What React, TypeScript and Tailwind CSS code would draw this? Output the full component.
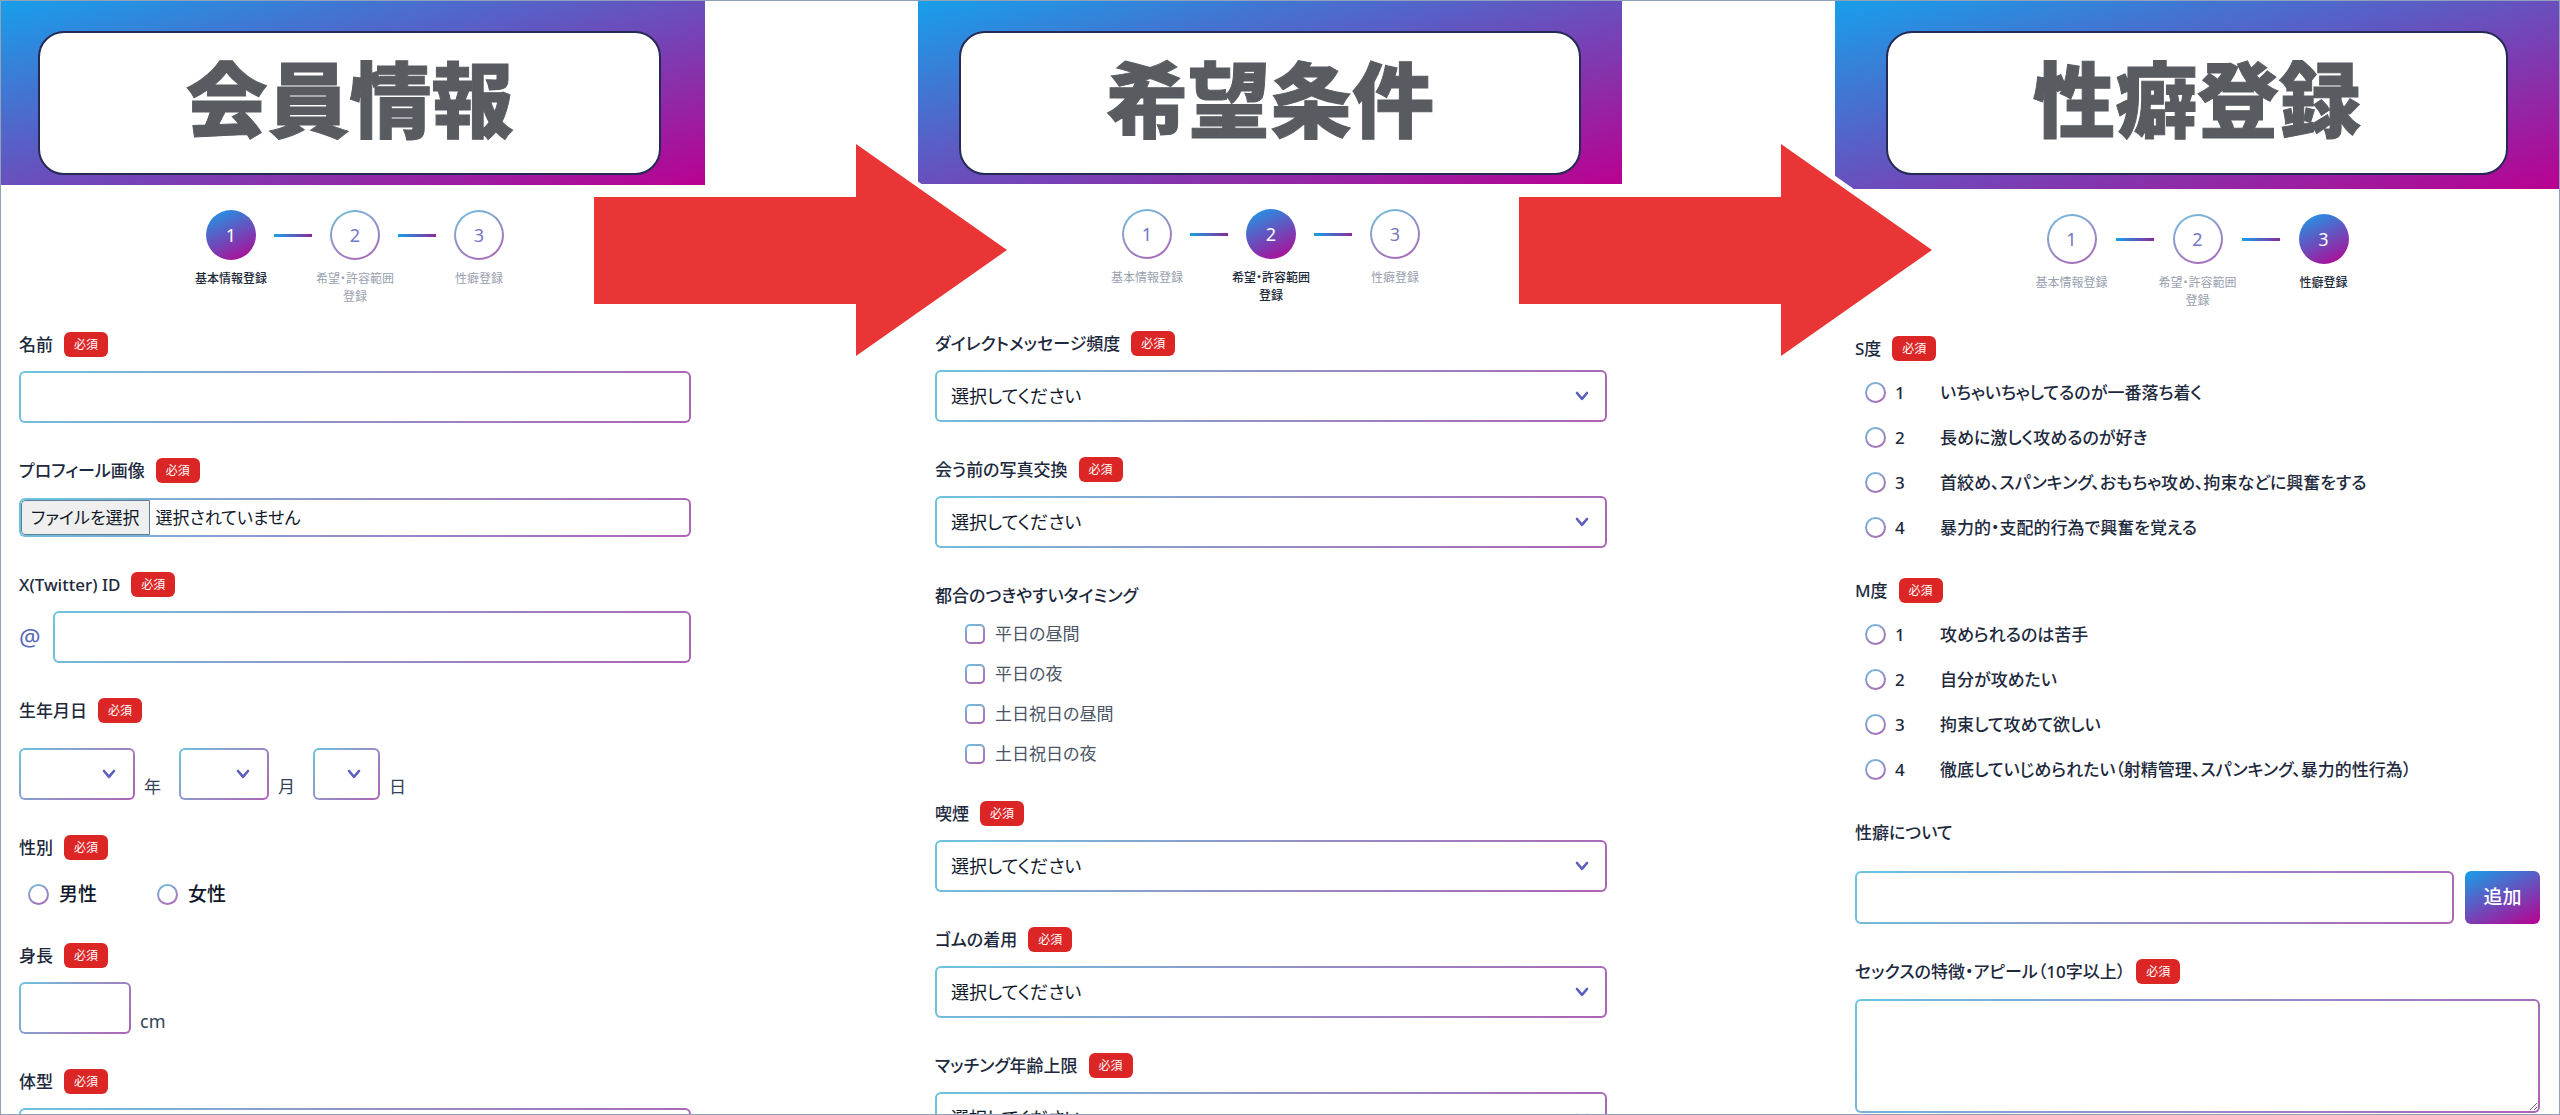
// src/App.tsx
import { useId, type ReactNode } from "react";
import clsx from "clsx";

// Borda em degradê usada em todos os campos
const gradientBorder =
  "border-2 border-transparent [background:linear-gradient(#fff,#fff)_padding-box,linear-gradient(135deg,#6cc4e0,#9490c6,#ae62b6)_border-box]";
const roundBorder =
  "border-2 border-transparent [background:linear-gradient(#fff,#fff)_padding-box,linear-gradient(155deg,#6cc4e0,#9490c6,#ae62b6)_border-box]";
const fieldBase = `${gradientBorder} rounded-md text-gray-900 outline-none`;
const bannerFill = "bg-linear-to-br/srgb from-[#179fea] to-[#ba0090]";
const brandFill = "bg-linear-155/srgb from-[#179fea] to-[#ba0090]";

const STEPS = ["基本情報登録", "希望・許容範囲登録", "性癖登録"];

const TIMINGS = ["平日の昼間", "平日の夜", "土日祝日の昼間", "土日祝日の夜"];

const S_LEVELS = [
  "いちゃいちゃしてるのが一番落ち着く",
  "長めに激しく攻めるのが好き",
  "首絞め、スパンキング、おもちゃ攻め、拘束などに興奮をする",
  "暴力的・支配的行為で興奮を覚える",
];

const M_LEVELS = [
  "攻められるのは苦手",
  "自分が攻めたい",
  "拘束して攻めて欲しい",
  "徹底していじめられたい（射精管理、スパンキング、暴力的性行為）",
];

function Required() {
  return (
    <span className="flex h-[25px] w-11 shrink-0 items-center justify-center rounded-md bg-[#dc2626] text-xs font-normal text-white">
      必須
    </span>
  );
}

type TitleProps = { text: string; htmlFor?: string; required?: boolean };

function FieldTitle({ text, htmlFor, required = true }: TitleProps) {
  const inner = <span>{text}</span>;
  return (
    <div className="flex h-[25px] items-center gap-[11px] text-[17px] font-medium whitespace-nowrap text-slate-800">
      {htmlFor ? <label htmlFor={htmlFor}>{inner}</label> : inner}
      {required && <Required />}
    </div>
  );
}

function Chevron({ className }: { className: string }) {
  return (
    <svg
      viewBox="0 0 14 10"
      className={clsx("pointer-events-none absolute top-[21px] h-[10px] w-[14px]", className)}
      fill="none"
      stroke="#5a5fc0"
      strokeWidth="2.6"
      strokeLinecap="round"
      strokeLinejoin="round"
    >
      <path d="M2 2l5 5.8L12 2" />
    </svg>
  );
}

function SelectField({ title }: { title: string }) {
  const id = useId();
  return (
    <div>
      <FieldTitle text={title} htmlFor={id} />
      <div className="relative mt-[14px]">
        <select id={id} className={`${fieldBase} block h-[52px] w-full appearance-none pr-12 pl-[14px] text-lg`}>
          <option>選択してください</option>
        </select>
        <Chevron className="right-[18px]" />
      </div>
    </div>
  );
}

function DateSelect({ unit, width }: { unit: string; width: string }) {
  return (
    <label className="flex items-end gap-[9px]">
      <span className={clsx("relative block", width)}>
        <select className={`${fieldBase} block h-[52px] w-full appearance-none`}>
          <option></option>
        </select>
        <Chevron className="right-[19px]" />
      </span>
      <span className="text-[17px] leading-[26px] text-slate-700">{unit}</span>
    </label>
  );
}

function Radio({ name, value }: { name: string; value: string }) {
  return (
    <input
      type="radio"
      name={name}
      value={value}
      className={`${roundBorder} size-[21px] shrink-0 appearance-none rounded-full`}
    />
  );
}

function LevelGroup({ title, name, levels }: { title: string; name: string; levels: string[] }) {
  return (
    <div role="radiogroup" aria-label={title}>
      <FieldTitle text={title} />
      <div className="mt-[21px] flex flex-col gap-6 pl-[10px]">
        {levels.map((level, i) => (
          <label
            key={level}
            className="flex h-[21px] items-center text-[17px] font-medium whitespace-nowrap text-slate-800"
          >
            <Radio name={name} value={String(i + 1)} />
            <span className="ml-[9px] w-[45px]">{i + 1}</span>
            {level}
          </label>
        ))}
      </div>
    </div>
  );
}

function Stepper({ current, stepWidth = "w-[86px]" }: { current: number; stepWidth?: string }) {
  return (
    <ol className="flex h-24 justify-center">
      {STEPS.map((label, i) => (
        <li key={label} className="flex">
          {i > 0 && <span className="mt-6 h-[3px] w-[38px] bg-linear-to-r/srgb from-[#179fea] to-[#8a2a98]" />}
          <span className={clsx("flex flex-col items-center", stepWidth)}>
            <span
              className={clsx(
                "flex size-[50px] items-center justify-center rounded-full text-lg",
                i === current ? `${brandFill} text-white` : `${roundBorder} text-[#7478c6]`,
              )}
            >
              {i + 1}
            </span>
            <span
              className={clsx(
                "mt-[10px] text-center text-xs leading-[18px]",
                i === current ? "font-medium text-gray-800" : "text-gray-400",
              )}
            >
              {label}
            </span>
          </span>
        </li>
      ))}
    </ol>
  );
}

function Banner({ title, className }: { title: string; className: string }) {
  return (
    <header className={clsx(bannerFill, "pt-[30px]", className)}>
      <div className="rounded-[26px] border-2 border-[#252a55] bg-white pt-[6px] pb-[14px] text-center">
        <h1 className="text-[82px] leading-[120px] font-black whitespace-nowrap text-[#585c61] [-webkit-text-stroke:1px_#585c61]">
          {title}
        </h1>
      </div>
    </header>
  );
}

// Seta vermelha por cima do espaço entre os painéis
function Arrow({ className }: { className: string }) {
  return (
    <div className="relative">
      <svg
        viewBox="0 0 413 212"
        className={clsx("absolute top-[143px] z-10 h-[212px] w-[413px] overflow-visible", className)}
      >
        <path
          d="M0 53H262V0L413 106L262 212V160H0Z"
          fill="#e93535"
          stroke="#fff"
          strokeWidth="10"
          paintOrder="stroke"
        />
      </svg>
    </div>
  );
}

function Panel({ banner, children, className }: { banner: ReactNode; children: ReactNode; className: string }) {
  return (
    <section className="min-w-0">
      {banner}
      <div className={clsx("pt-[25px]", className)}>{children}</div>
    </section>
  );
}

function MemberInfo() {
  return (
    <Panel banner={<Banner title="会員情報" className="pr-[44px] pb-[10px] pl-[37px]" />} className="pr-[14px] pl-[18px]">
      <Stepper current={0} />
      <form className="mt-[26px] flex flex-col gap-[35px]">
        <div>
          <FieldTitle text="名前" htmlFor="name" />
          <input id="name" type="text" className={`${fieldBase} mt-[14px] block h-[52px] w-full px-3`} />
        </div>

        <div>
          <FieldTitle text="プロフィール画像" htmlFor="avatar" />
          <label
            htmlFor="avatar"
            className={`${fieldBase} mt-[15px] flex h-[39px] items-stretch overflow-hidden text-[17px] whitespace-nowrap`}
          >
            <input id="avatar" type="file" className="sr-only" />
            <span className="flex items-center rounded-l border border-[#5d7f95] bg-[#efefef] px-[9px]">
              ファイルを選択
            </span>
            <span className="flex items-center pl-[6px]">選択されていません</span>
          </label>
        </div>

        <div>
          <FieldTitle text="X(Twitter) ID" htmlFor="xid" />
          <div className="mt-[14px] flex items-center">
            <span className="w-[34px] text-2xl text-[#5a68b8]">@</span>
            <input id="xid" type="text" className={`${fieldBase} h-[52px] min-w-0 flex-1 px-3`} />
          </div>
        </div>

        <div>
          <FieldTitle text="生年月日" />
          <div className="mt-[25px] flex gap-[18px]">
            <DateSelect unit="年" width="w-[116px]" />
            <DateSelect unit="月" width="w-[90px]" />
            <DateSelect unit="日" width="w-[67px]" />
          </div>
        </div>

        <div role="radiogroup" aria-label="性別" className="pb-[3px]">
          <FieldTitle text="性別" />
          <div className="mt-6 flex gap-[60px] pl-[9px] text-[19px] font-medium text-slate-900">
            {["男性", "女性"].map((gender) => (
              <label key={gender} className="flex h-[21px] items-center gap-[10px]">
                <Radio name="gender" value={gender} />
                {gender}
              </label>
            ))}
          </div>
        </div>

        <div>
          <FieldTitle text="身長" htmlFor="height" />
          <div className="mt-[14px] flex items-end gap-[9px]">
            <input id="height" type="text" className={`${fieldBase} h-[52px] w-[112px] px-3`} />
            <span className="text-lg leading-[26px] text-slate-700">cm</span>
          </div>
        </div>

        <SelectField title="体型" />
      </form>
    </Panel>
  );
}

function Preferences() {
  return (
    <Panel banner={<Banner title="希望条件" className="px-[41px] pb-[9px]" />} className="pr-[15px] pl-[17px]">
      <Stepper current={1} />
      <form className="mt-[26px] flex flex-col gap-[35px]">
        <SelectField title="ダイレクトメッセージ頻度" />
        <SelectField title="会う前の写真交換" />
        <fieldset className="pb-0.5">
          <FieldTitle text="都合のつきやすいタイミング" required={false} />
          <div className="mt-4 flex flex-col gap-5 pl-[30px]">
            {TIMINGS.map((timing) => (
              <label key={timing} className="flex h-5 items-center gap-[10px] text-[17px] text-gray-600">
                <input type="checkbox" className={`${roundBorder} size-5 appearance-none rounded-[5px]`} />
                {timing}
              </label>
            ))}
          </div>
        </fieldset>
        <SelectField title="喫煙" />
        <SelectField title="ゴムの着用" />
        <SelectField title="マッチング年齢上限" />
      </form>
    </Panel>
  );
}

function Tastes() {
  return (
    <Panel banner={<Banner title="性癖登録" className="px-[51px] pb-[14px]" />} className="pr-[19px] pl-5">
      <Stepper current={2} stepWidth="w-[88px]" />
      <form className="mt-[26px] flex flex-col gap-10">
        <LevelGroup title="S度" name="s-level" levels={S_LEVELS} />
        <LevelGroup title="M度" name="m-level" levels={M_LEVELS} />

        <div className="flex flex-col gap-[35px]">
          <div>
            <FieldTitle text="性癖について" htmlFor="taste" required={false} />
            <div className="mt-[26px] flex gap-[11px]">
              <input id="taste" type="text" className={`${fieldBase} h-[53px] min-w-0 flex-1 px-3`} />
              <button type="button" className={`${brandFill} w-[75px] rounded-md text-[19px] font-medium text-white`}>
                追加
              </button>
            </div>
          </div>
          <div>
            <FieldTitle text="セックスの特徴・アピール（10字以上）" htmlFor="appeal" />
            <textarea id="appeal" className={`${fieldBase} mt-[15px] block h-[114px] w-full px-3`} />
          </div>
        </div>
      </form>
    </Panel>
  );
}

export default function App() {
  return (
    <main
      lang="ja"
      className="grid h-screen grid-cols-[704fr_213fr_704fr_213fr_724fr] overflow-hidden border border-slate-400 bg-white font-['Noto_Sans','Noto_Sans_CJK_JP',sans-serif] [font-feature-settings:'palt']"
    >
      <MemberInfo />
      <Arrow className="-left-[111px]" />
      <Preferences />
      <Arrow className="-left-[103px]" />
      <Tastes />
    </main>
  );
}
